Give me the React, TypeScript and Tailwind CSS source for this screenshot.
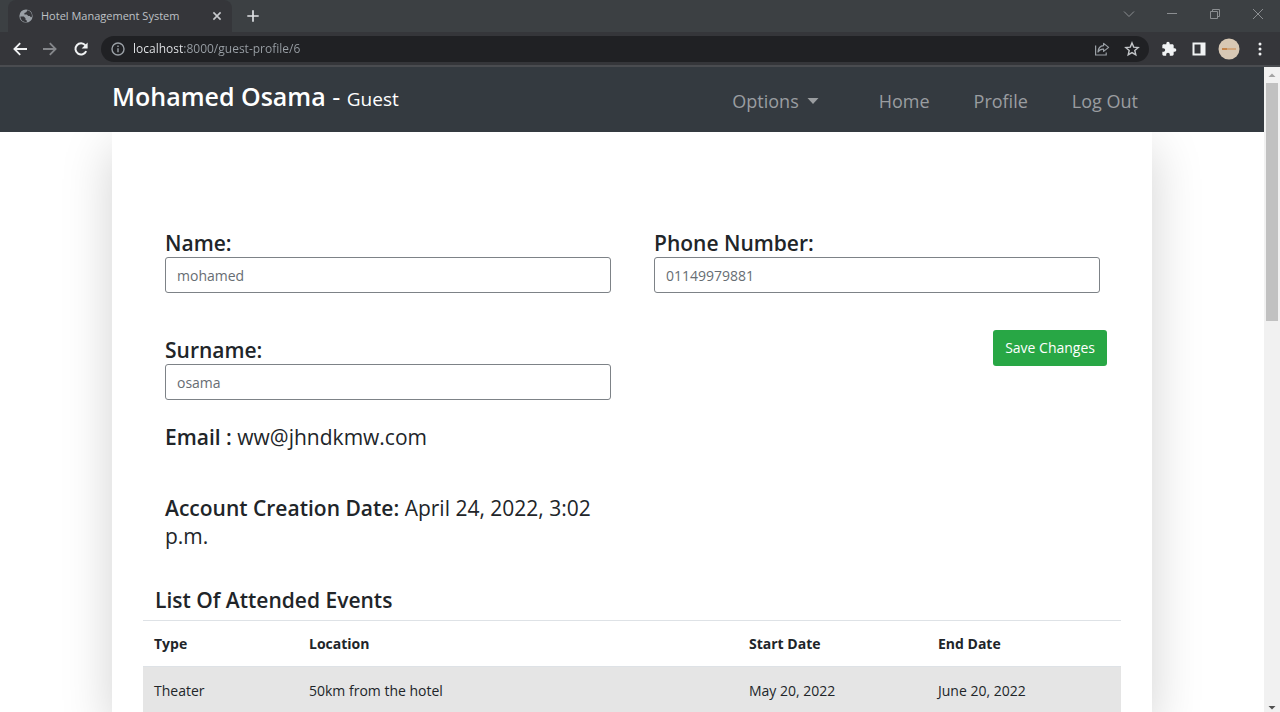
import React from "react";
import { MdExtension } from "react-icons/md";

const events = [
  { type: "Theater", location: "50km from the hotel", start: "May 20, 2022", end: "June 20, 2022" },
];

function TabStrip() {
  return (
    <div className="flex h-8 shrink-0 items-start justify-between bg-[#3c4043]">
      <div className="flex h-8 items-center pl-2">
        <div className="flex h-8 w-[224px] items-center rounded-t-lg bg-[#35363a] pr-[9px] pl-[10px]">
          <svg width="16" height="16" viewBox="0 0 16 16">
            <circle cx="8" cy="8" r="6.6" fill="#9aa0a6" />
            <path
              d="M2.4 8.4l3.4.2 1.700 1.600v1.500l1.300.9v1.500C5.500 14.300 2.300 12 2.400 8.400zM9.400 2.300L8.300 4.200 6.400 5v1.400H8.800l1.500 1.700h1.500l1 1.200 1-.4C14.600 5.500 12.300 2.800 9.400 2.300z"
              fill="#35363a"
            />
          </svg>
          <span className="ml-[7px] flex-1 text-[11px] text-[#bfc2c6]">Hotel Management System</span>
          <button type="button" aria-label="Close tab" className="text-[#c8cacd]">
            <svg width="12" height="12" viewBox="0 0 12 12" stroke="currentColor" strokeWidth="1.6" fill="none">
              <path d="M2.4 2.4l7.2 7.2M9.6 2.4L2.4 9.600" />
            </svg>
          </button>
        </div>
        <button type="button" aria-label="New tab" className="ml-[14px] text-[#dfe1e5]">
          <svg width="14" height="14" viewBox="0 0 14 14" stroke="currentColor" strokeWidth="1.7" fill="none">
            <path d="M7 1.3v11.4M1.3 7h11.4" />
          </svg>
        </button>
      </div>
      <div className="flex h-7 items-center gap-[31px] pr-4 text-[#8b8e91]">
        <button type="button" aria-label="Search tabs">
          <svg width="12" height="12" viewBox="0 0 12 12" stroke="currentColor" fill="none">
            <path d="M1 3.5l5 5 5-5" />
          </svg>
        </button>
        <button type="button" aria-label="Minimize">
          <svg width="12" height="12" viewBox="0 0 12 12" stroke="currentColor" fill="none">
            <path d="M1 5.5h10" />
          </svg>
        </button>
        <button type="button" aria-label="Restore">
          <svg width="12" height="12" viewBox="0 0 12 12" stroke="currentColor" fill="none">
            <path d="M1.5 3.5h7v7h-7zM3.5 3.5v-2h7v7h-2" />
          </svg>
        </button>
        <button type="button" aria-label="Close">
          <svg width="12" height="12" viewBox="0 0 12 12" stroke="currentColor" fill="none">
            <path d="M1 1l10 10M11 1L1 11" />
          </svg>
        </button>
      </div>
    </div>
  );
}

function Toolbar() {
  return (
    <div className="flex h-[35px] shrink-0 items-center border-b-2 border-[#4a4c50] bg-[#35363a] pr-[13px] pl-3">
      <button type="button" aria-label="Back" className="text-[#f1f3f4]">
        <svg width="16" height="16" viewBox="0 0 16 16" stroke="currentColor" strokeWidth="1.8" fill="none">
          <path d="M15 8H2.8M8.2 2.2L2.4 8l5.8 5.8" />
        </svg>
      </button>
      <button type="button" aria-label="Forward" className="ml-[14px] text-[#85878b]">
        <svg width="16" height="16" viewBox="0 0 16 16" stroke="currentColor" strokeWidth="1.8" fill="none">
          <path d="M1 8h12.2M7.8 2.2L13.6 8l-5.8 5.8" />
        </svg>
      </button>
      <button type="button" aria-label="Reload" className="ml-[15px] text-[#f1f3f4]">
        <svg width="16" height="16" viewBox="0 0 16 16" fill="none">
          <path d="M13.2 10.2A5.6 5.6 0 1 1 12.4 4.4" stroke="currentColor" strokeWidth="2" />
          <path d="M14.6 1.4v6H8.6z" fill="currentColor" />
        </svg>
      </button>
      <div className="ml-[12px] flex h-[26px] flex-1 items-center rounded-full bg-[#202124] pr-[9px] pl-[10px]">
        <svg width="14" height="14" viewBox="0 0 14 14" fill="none" stroke="#9aa0a6" strokeWidth="1.4">
          <circle cx="7" cy="7" r="6" />
          <path d="M7 6.2v4M7 3.4v1.5" />
        </svg>
        <input
          aria-label="Address"
          defaultValue="localhost:8000/guest-profile/6"
          className="ml-2 min-w-0 flex-1 bg-[linear-gradient(90deg,#e8eaed_50px,#9aa0a6_50px)] bg-clip-text text-xs text-transparent outline-none"
        />
        <button type="button" aria-label="Share" className="text-[#9aa0a6]">
          <svg width="16" height="16" viewBox="0 0 16 16" fill="none" stroke="currentColor" strokeWidth="1.2">
            <path d="M1.6 4.600v9.400h10.600v-2.400" />
            <path d="M9.600 2.400l5 4-5 4V8.200C7 8 5.200 9 4 11c.2-3.600 2.200-6 5.600-6.300z" strokeLinejoin="round" />
          </svg>
        </button>
        <button type="button" aria-label="Bookmark" className="ml-[14px] text-[#c4c7ca]">
          <svg width="16" height="16" viewBox="0 0 16 16" fill="none" stroke="currentColor" strokeWidth="1.4">
            <path d="M8 1.900l1.700 4.200 4.500.4-3.400 3 1 4.400L8 11.600l-3.800 2.300 1-4.400-3.400-3 4.500-.4z" />
          </svg>
        </button>
      </div>
      <button type="button" aria-label="Extensions" className="ml-[12px] text-[#f1f3f4]">
        <MdExtension className="size-4" />
      </button>
      <button type="button" aria-label="Side panel" className="ml-[15px] text-[#f1f3f4]">
        <svg width="14" height="14" viewBox="0 0 14 14">
          <path fill="currentColor" fillRule="evenodd" d="M0.500 0.500h13v13h-13zM2.500 2.500v9h6v-9z" />
        </svg>
      </button>
      <button type="button" aria-label="Account" className="ml-[12px]">
        <svg width="22" height="22" viewBox="0 0 22 22">
          <circle cx="11" cy="11" r="10.500" fill="#d8c8b4" />
          <path d="M4 11h14" stroke="#cf9d6c" strokeWidth="1.500" />
          <path d="M4 11h5" stroke="#c07a3c" strokeWidth="1.500" />
        </svg>
      </button>
      <button type="button" aria-label="Menu" className="ml-[13px] text-[#f1f3f4]">
        <svg width="14" height="14" viewBox="0 0 14 14" fill="currentColor">
          <circle cx="7" cy="2" r="1.500" />
          <circle cx="7" cy="7" r="1.500" />
          <circle cx="7" cy="12" r="1.500" />
        </svg>
      </button>
    </div>
  );
}

function SiteNav() {
  return (
    <header className="flex h-[65px] shrink-0 justify-center bg-[#343a40]">
      <div className="flex w-full max-w-[1040px] justify-between">
        <h1 className="pt-[10px] text-[25px] leading-[38px] font-semibold text-white">
          Mohamed Osama <span className="font-normal">-</span> <span className="text-[19px] font-normal">Guest</span>
        </h1>
        <nav className="flex items-center gap-11 pt-[3px] pr-[14px] text-lg text-[#9a9da0]">
          <button type="button" className="mr-4 flex items-center gap-2">
            Options
            <svg width="12" height="6" viewBox="0 0 12 6" fill="currentColor">
              <path d="M0.500 0h11L6 6z" />
            </svg>
          </button>
          <a href="#home">Home</a>
          <a href="#profile">Profile</a>
          <a href="#logout">Log Out</a>
        </nav>
      </div>
    </header>
  );
}

function Field({ id, label, value }: { id: string; label: string; value: string }) {
  return (
    <div className="flex flex-col">
      <label htmlFor={id} className="text-[21px] leading-[27px] font-semibold">{label}</label>
      <input
        id={id}
        defaultValue={value}
        className="h-9 w-full rounded-[3px] border border-[#7d8287] bg-white px-[11px] text-sm text-[#676d73]"
      />
    </div>
  );
}

function EventsTable() {
  return (
    <table className="mt-[6px] w-full table-fixed text-left text-sm">
      <thead>
        <tr className="h-[46px] border-t border-[#dee2e6]">
          <th className="w-[155px] px-[11px] font-bold">Type</th>
          <th className="px-[11px] font-bold">Location</th>
          <th className="w-[189px] px-[11px] font-bold">Start Date</th>
          <th className="w-[194px] px-[11px] font-bold">End Date</th>
        </tr>
      </thead>
      <tbody>
        {events.map((e) => (
          <tr key={e.type} className="h-12 border-t border-[#dee2e6] bg-[#e5e5e5]">
            <td className="px-[11px]">{e.type}</td>
            <td className="px-[11px]">{e.location}</td>
            <td className="px-[11px]">{e.start}</td>
            <td className="px-[11px]">{e.end}</td>
          </tr>
        ))}
      </tbody>
    </table>
  );
}

function Scrollbar() {
  return (
    <div aria-hidden="true" className="flex w-4 shrink-0 flex-col items-center bg-[#f1f1f1]">
      <svg width="16" height="16" viewBox="0 0 16 16" fill="#a3a3a3">
        <path d="M4.500 10L8 6.500l3.500 3.500z" />
      </svg>
      <div className="h-[238px] w-3 bg-[#c1c1c1]" />
      <svg className="mt-auto" width="16" height="16" viewBox="0 0 16 16" fill="#505050">
        <path d="M4.500 10L8 13.500l3.500-3.500z" />
      </svg>
    </div>
  );
}

export default function App() {
  return (
    <div className="flex h-screen flex-col overflow-hidden bg-white font-['Open_Sans',sans-serif] text-[#212529]">
      <TabStrip />
      <Toolbar />
      <div className="flex min-h-0 flex-1">
        <div className="flex min-w-0 flex-1 flex-col overflow-hidden">
          <SiteNav />
          <div className="flex flex-1 justify-center overflow-hidden">
            <main className="h-max min-h-full w-full max-w-[1040px] px-[31px] pt-[98px] shadow-[0_16px_48px_rgba(0,0,0,0.18)]">
              <form className="grid grid-cols-2 gap-x-[43px] pr-[21px] pl-[22px]">
                <div className="flex flex-col gap-11">
                  <Field id="name" label="Name:" value="mohamed" />
                  <Field id="surname" label="Surname:" value="osama" />
                  <div className="-mt-[21px] text-[21px] leading-7">
                    <p><b className="font-semibold">Email :</b> ww@jhndkmw.com</p>
                    <p className="mt-[43px]"><b className="font-semibold">Account Creation Date:</b> April 24, 2022, 3:02 p.m.</p>
                  </div>
                </div>
                <div className="flex flex-col">
                  <Field id="phone" label="Phone Number:" value="01149979881" />
                  <button type="button" className="mt-[37px] -mr-[7px] h-9 self-end rounded-[3px] bg-[#28a745] px-3 text-sm text-white">
                    Save Changes
                  </button>
                </div>
              </form>
              <h2 className="mt-9 px-3 text-[21px] leading-7 font-semibold">List Of Attended Events</h2>
              <EventsTable />
            </main>
          </div>
        </div>
        <Scrollbar />
      </div>
    </div>
  );
}
